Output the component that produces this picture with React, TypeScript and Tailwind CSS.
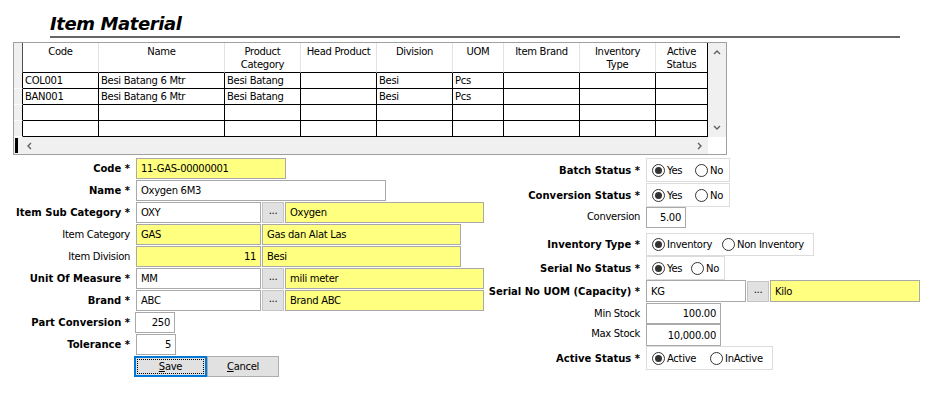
import React from 'react';

const cols = [
  { key: 'code', label: ['Code'], w: 'w-[76px]' },
  { key: 'name', label: ['Name'], w: 'w-[126px]' },
  { key: 'cat', label: ['Product', 'Category'], w: 'w-[76px]' },
  { key: 'head', label: ['Head Product'], w: 'w-[76px]' },
  { key: 'div', label: ['Division'], w: 'w-[76px]' },
  { key: 'uom', label: ['UOM'], w: 'w-[51px]' },
  { key: 'brand', label: ['Item Brand'], w: 'w-[76px]' },
  { key: 'inv', label: ['Inventory', 'Type'], w: 'w-[76px]' },
  { key: 'act', label: ['Active', 'Status'], w: 'w-[52px]' },
];

const rows: Record<string, string>[] = [
  { code: 'COL001', name: 'Besi Batang 6 Mtr', cat: 'Besi Batang', div: 'Besi', uom: 'Pcs' },
  { code: 'BAN001', name: 'Besi Batang 6 Mtr', cat: 'Besi Batang', div: 'Besi', uom: 'Pcs' },
  {},
  {},
];

const Chevron = ({ dir }: { dir: 'l' | 'r' | 'u' | 'd' }) => {
  const pts = { l: '5,1 2,4 5,7', r: '3,1 6,4 3,7', u: '1,5 4,2 7,5', d: '1,3 4,6 7,3' }[dir];
  return (
    <svg width="8" height="8" viewBox="0 0 8 8">
      <polyline points={pts} fill="none" stroke="#606060" strokeWidth="1.4" />
    </svg>
  );
};

const Grid = () => (
  <div className="ml-[13px] mt-[4px] w-[714px] h-[113px] border border-[#a0a0a0] flex">
    <div className="w-[694px] flex flex-col">
      <div className="flex h-[30px]">
        <div className="w-[9px] h-full bg-[#f0f0f0] border-r border-[#505050]" />
        {cols.map((c) => (
          <div key={c.key} className={`${c.w} h-full border-r border-[#e3e3e3] last:border-black border-b border-b-black text-center leading-[13px] pt-[2px]`}>
            {c.label.map((l) => (
              <div key={l} className="whitespace-nowrap">{l}</div>
            ))}
          </div>
        ))}
      </div>
      {rows.map((r, i) => (
        <div key={i} className="flex h-[16px]">
          <div className="w-[9px] h-full bg-[#f0f0f0] border-r border-r-black border-b border-b-white" />
          {cols.map((c) => (
            <div key={c.key} className={`${c.w} h-full border-r border-b border-black px-[2px] leading-[15px] whitespace-nowrap overflow-hidden`}>
              {r[c.key] ?? ''}
            </div>
          ))}
        </div>
      ))}
      <div className="h-[17px] bg-[#f0f0f0] flex items-center">
        <div className="w-[3px] h-[15px] bg-black ml-[1px]" />
        <div className="ml-[8px]"><Chevron dir="l" /></div>
        <div className="ml-auto mr-[5px]"><Chevron dir="r" /></div>
      </div>
    </div>
    <div className="w-[18px] flex flex-col">
      <div className="h-[94px] bg-[#f0f0f0] flex flex-col items-center justify-between py-[6px]">
        <Chevron dir="u" />
        <Chevron dir="d" />
      </div>
      <div className="flex-1 bg-white" />
    </div>
  </div>
);

const Box = ({ w, yellow, right, children, h = 'h-[21px]' }: { w: string; yellow?: boolean; right?: boolean; children?: React.ReactNode; h?: string }) => (
  <div className={`${w} ${h} border border-[#a9a9a9] ${yellow ? 'bg-[#ffff80]' : 'bg-white'} flex items-center px-[4px] whitespace-nowrap ${right ? 'justify-end' : ''}`}>
    {children}
  </div>
);

const Dots = () => (
  <div className="w-[22px] h-[21px] mx-[1px] bg-[#e1e1e1] border border-[#c4c4c4] flex items-center justify-center pb-[3px]">...</div>
);

const Label = ({ text, bold, w, extra = '' }: { text: string; bold?: boolean; w: string; extra?: string }) => (
  <div className={`${w} shrink-0 text-right whitespace-nowrap pr-[1px] ${bold ? 'font-bold tracking-normal' : ''} ${extra}`}>{text}</div>
);

const LRow = ({ label, bold = true, children }: { label: string; bold?: boolean; children: React.ReactNode }) => (
  <div className="h-[22px] flex items-center">
    <Label text={label} bold={bold} w="w-[131px]" />
    <div className="ml-[5px] flex items-center">{children}</div>
  </div>
);

const Radio = ({ checked, label, w }: { checked?: boolean; label: string; w?: string }) => (
  <div className={`flex items-center ${w ?? ''}`}>
    <span className="w-[13px] h-[13px] rounded-full border border-[#333] bg-white flex items-center justify-center">
      {checked && <span className="w-[7px] h-[7px] rounded-full bg-[#333]" />}
    </span>
    <span className="ml-[2px]">{label}</span>
  </div>
);

const RRow = ({ label, bold = true, h, mt = '', lx = '', children }: { label: string; bold?: boolean; h: string; mt?: string; lx?: string; children: React.ReactNode }) => (
  <div className={`${h} ${mt} flex items-center`}>
    <Label text={label} bold={bold} w="w-[155px]" extra={lx} />
    <div className="ml-[5px] flex items-center h-full">{children}</div>
  </div>
);

const RadioBox = ({ w, h, children }: { w: string; h: string; children: React.ReactNode }) => (
  <div className={`${w} ${h} border border-[#dcdcdc] flex items-center pl-[5px]`}>{children}</div>
);

export default function App() {
  return (
    <div className="w-[950px] h-[400px] bg-white text-black text-[10px] tracking-[-0.3px] font-['DejaVu_Sans',sans-serif] overflow-hidden">
      <div className="ml-[50px] w-[850px] h-[38px] border-b-2 border-[#666] flex items-end">
        <h1 className="text-[18px] font-bold italic tracking-[-0.4px] leading-[20px] mb-[2px]">Item Material</h1>
      </div>
      <Grid />
      <div className="flex">
        <div className="w-[486px] mt-[2px] flex flex-col">
          <LRow label="Code *"><Box w="w-[150px]" yellow>11-GAS-00000001</Box></LRow>
          <LRow label="Name *"><Box w="w-[250px]">Oxygen 6M3</Box></LRow>
          <LRow label="Item Sub Category *">
            <Box w="w-[125px]">OXY</Box><Dots /><Box w="w-[199px]" yellow>Oxygen</Box>
          </LRow>
          <LRow label="Item Category" bold={false}>
            <Box w="w-[125px]" yellow>GAS</Box><div className="w-[1px]" /><Box w="w-[199px]" yellow>Gas dan Alat Las</Box>
          </LRow>
          <LRow label="Item Division" bold={false}>
            <Box w="w-[125px]" yellow right>11</Box><div className="w-[1px]" /><Box w="w-[199px]" yellow>Besi</Box>
          </LRow>
          <LRow label="Unit Of Measure *">
            <Box w="w-[125px]">MM</Box><Dots /><Box w="w-[199px]" yellow>mili meter</Box>
          </LRow>
          <LRow label="Brand *">
            <Box w="w-[125px]">ABC</Box><Dots /><Box w="w-[199px]" yellow>Brand ABC</Box>
          </LRow>
          <LRow label="Part Conversion *">
            <div className="-ml-[1px]"><Box w="w-[40px]" right>250</Box></div>
          </LRow>
          <LRow label="Tolerance *"><Box w="w-[40px]" right>5</Box></LRow>
          <div className="h-[22px] flex items-center pl-[134px]">
            <div className="w-[73px] h-[21px] border-2 border-[#0078d7] bg-[#e1e1e1] p-[1px]">
              <div className="w-full h-full border border-dotted border-black flex items-center justify-center">
                <span><span className="underline">S</span>ave</span>
              </div>
            </div>
            <div className="w-[72px] h-[21px] border border-[#adadad] bg-[#e1e1e1] flex items-center justify-center">
              <span><span className="underline">C</span>ancel</span>
            </div>
          </div>
        </div>
        <div className="flex flex-col mt-[3px]">
          <RRow label="Batch Status *" h="h-[24px]">
            <RadioBox w="w-[84px]" h="h-[24px]"><Radio checked label="Yes" w="w-[43px]" /><Radio label="No" /></RadioBox>
          </RRow>
          <RRow label="Conversion Status *" h="h-[24px]" mt="mt-[1px]">
            <RadioBox w="w-[84px]" h="h-[24px]"><Radio checked label="Yes" w="w-[43px]" /><Radio label="No" /></RadioBox>
          </RRow>
          <RRow label="Conversion" bold={false} h="h-[21px]" lx="-mt-[2px]">
            <Box w="w-[40px]" right>5.00</Box>
          </RRow>
          <RRow label="Inventory Type *" h="h-[23px]" mt="mt-[5px]">
            <RadioBox w="w-[168px]" h="h-[23px]"><Radio checked label="Inventory" w="w-[70px]" /><Radio label="Non Inventory" /></RadioBox>
          </RRow>
          <RRow label="Serial No Status *" h="h-[24px]">
            <RadioBox w="w-[79px]" h="h-[24px]"><Radio checked label="Yes" w="w-[39px]" /><Radio label="No" /></RadioBox>
          </RRow>
          <RRow label="Serial No UOM (Capacity) *" h="h-[22px]">
            <Box w="w-[100px]" h="h-[22px]">KG</Box><Dots /><Box w="w-[150px]" h="h-[22px]" yellow>Kilo</Box>
          </RRow>
          <RRow label="Min Stock" bold={false} h="h-[21px]" mt="mt-[1px]">
            <Box w="w-[75px]" right>100.00</Box>
          </RRow>
          <RRow label="Max Stock" bold={false} h="h-[22px]" lx="-mt-[4px]">
            <Box w="w-[75px]" h="h-[22px]" right>10,000.00</Box>
          </RRow>
          <RRow label="Active Status *" h="h-[24px]">
            <RadioBox w="w-[127px]" h="h-[24px]"><Radio checked label="Active" w="w-[58px]" /><Radio label="InActive" /></RadioBox>
          </RRow>
        </div>
      </div>
    </div>
  );
}
